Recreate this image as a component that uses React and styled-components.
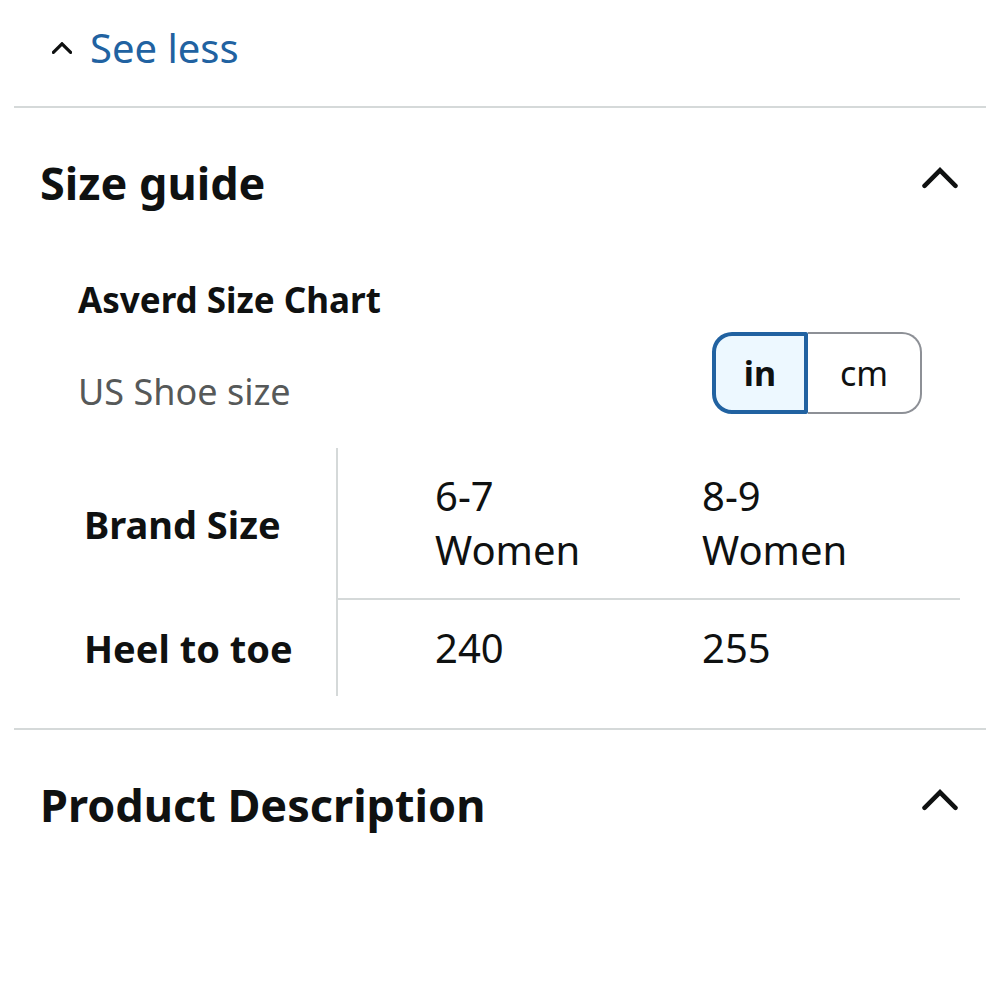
import React from "react";
import styled, { createGlobalStyle } from "styled-components";

const GlobalStyle = createGlobalStyle`
  html, body {
    margin: 0;
    padding: 0;
    background: #ffffff;
  }
  body {
    font-family: "Noto Sans", "Open Sans", Arial, sans-serif;
    color: #0f1111;
  }
`;

function Chevron({ size = 36, stroke = 4.5 }) {
  return (
    <svg width={size} height={size * 0.6} viewBox="0 0 36 21" fill="none">
      <polyline
        points="2.5,18.5 18,3 33.5,18.5"
        stroke="#0f1111"
        strokeWidth={stroke * (36 / size)}
        strokeLinecap="round"
        strokeLinejoin="miter"
      />
    </svg>
  );
}

export default function App() {
  return (
    <Page>
      <GlobalStyle />
      <SeeLess>
        <Chevron size={20} stroke={3.2} />
        <LinkText>See less</LinkText>
      </SeeLess>
      <Divider />

      <SectionHeader>
        <SectionTitle>Size guide</SectionTitle>
        <ToggleIcon>
          <Chevron />
        </ToggleIcon>
      </SectionHeader>

      <Content>
        <ChartTitle>Asverd Size Chart</ChartTitle>
        <UnitRow>
          <Muted>US Shoe size</Muted>
          <Toggle>
            <Segment $active>in</Segment>
            <Segment>cm</Segment>
          </Toggle>
        </UnitRow>
      </Content>

      <Table>
        <LabelCell>Brand Size</LabelCell>
        <ValueCell $top>
          6-7
          <br />
          Women
        </ValueCell>
        <ValueCell $top>
          8-9
          <br />
          Women
        </ValueCell>
        <LabelCell>Heel to toe</LabelCell>
        <ValueCell>240</ValueCell>
        <ValueCell>255</ValueCell>
      </Table>

      <Divider />

      <SectionHeader>
        <SectionTitle>Product Description</SectionTitle>
        <ToggleIcon>
          <Chevron />
        </ToggleIcon>
      </SectionHeader>
    </Page>
  );
}

const Page = styled.div`
  padding: 0 14px;
  min-height: 1000px;
  box-sizing: border-box;
`;

const SeeLess = styled.div`
  display: flex;
  align-items: center;
  gap: 18px;
  padding: 22px 0 32px 38px;
  height: 52px;
`;

const LinkText = styled.span`
  font-size: 40px;
  line-height: 52px;
  color: #2162a1;
`;

const Divider = styled.div`
  height: 2px;
  background: #d5d9d9;
`;

const SectionHeader = styled.div`
  display: flex;
  align-items: center;
  justify-content: space-between;
  padding: 45px 28px 0 26px;
  height: 60px;
`;

const SectionTitle = styled.h2`
  margin: 0;
  font-size: 45px;
  line-height: 60px;
  font-weight: 700;
`;

const ToggleIcon = styled.div`
  display: flex;
  margin-bottom: 10px;
`;

const Content = styled.div`
  display: grid;
  gap: 9px;
  padding: 64px 64px 0 64px;
`;

const ChartTitle = styled.div`
  font-size: 35px;
  line-height: 46px;
  font-weight: 700;
`;

const UnitRow = styled.div`
  display: flex;
  align-items: flex-end;
  justify-content: space-between;
`;

const Muted = styled.div`
  font-size: 36px;
  line-height: 44px;
  color: #565959;
`;

const Toggle = styled.div`
  display: flex;
  height: 82px;
`;

const Segment = styled.div`
  display: flex;
  align-items: center;
  justify-content: center;
  box-sizing: border-box;
  font-size: 34px;
  font-weight: ${(p) => (p.$active ? 700 : 400)};
  width: ${(p) => (p.$active ? "96px" : "114px")};
  background: ${(p) => (p.$active ? "#edf8ff" : "#ffffff")};
  border: ${(p) => (p.$active ? "4px solid #2162a1" : "2px solid #8d9096")};
  border-left: ${(p) => (p.$active ? "4px solid #2162a1" : "none")};
  border-radius: ${(p) => (p.$active ? "20px 2px 2px 20px" : "0 20px 20px 0")};
`;

const Table = styled.div`
  display: grid;
  grid-template-columns: 260px 267px 1fr;
  margin: 34px 26px 32px 64px;
`;

const LabelCell = styled.div`
  display: flex;
  align-items: center;
  padding-left: 6px;
  font-size: 38px;
  font-weight: 700;
  border-right: 2px solid #d5d9d9;
`;

const ValueCell = styled.div`
  padding: 21px 0 21px 97px;
  font-size: 40px;
  line-height: 54px;
  border-bottom: ${(p) => (p.$top ? "2px solid #d5d9d9" : "none")};
`;
